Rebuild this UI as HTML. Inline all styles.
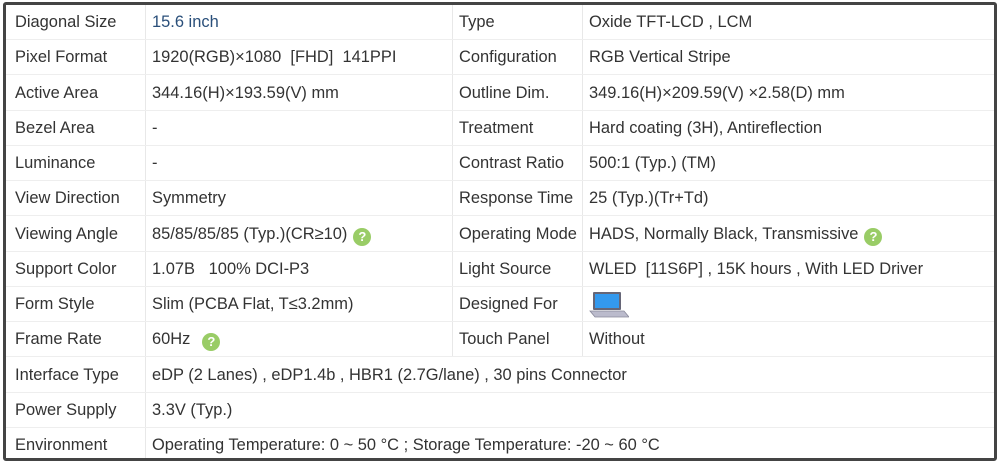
<!DOCTYPE html><html><head><style>
body{margin:0;width:1000px;height:463px;background:#fff;overflow:hidden;font-family:"Liberation Sans",Arial,sans-serif;font-size:16.45px;color:#333}
.box{position:absolute;left:3px;top:2px;width:988px;height:453px;border:3px solid #444;border-radius:3px}
.r{position:absolute;left:0;width:988px;height:35px;border-bottom:1px solid #eee;box-sizing:border-box}
.c{position:absolute;top:0;height:34px;line-height:34px;white-space:nowrap}
.vl{position:absolute;top:0;bottom:0;width:1px;background:#e8e8e8}
.q{display:inline-block;width:18px;height:18px;border-radius:50%;background:#9c6;color:#fff;font-weight:bold;font-size:13px;line-height:18px;text-align:center;vertical-align:-2px;margin-left:6px}
</style></head><body><div class="box">
<div class="vl" style="left:139px"></div><div class="vl" style="left:446px;bottom:auto;height:352px"></div><div class="vl" style="left:576px;bottom:auto;height:352px"></div>
<div class="r" style="top:0"><span class="c" style="left:9px">Diagonal Size</span><span class="c" style="left:146px;color:#2a4f7a">15.6 inch</span><span class="c" style="left:453px">Type</span><span class="c" style="left:583px">Oxide TFT-LCD , LCM</span></div>
<div class="r" style="top:35.25px"><span class="c" style="left:9px">Pixel Format</span><span class="c" style="left:146px">1920(RGB)×1080&nbsp; [FHD]&nbsp; 141PPI</span><span class="c" style="left:453px">Configuration</span><span class="c" style="left:583px">RGB Vertical Stripe</span></div>
<div class="r" style="top:70.5px"><span class="c" style="left:9px">Active Area</span><span class="c" style="left:146px">344.16(H)×193.59(V) mm</span><span class="c" style="left:453px">Outline Dim.</span><span class="c" style="left:583px">349.16(H)×209.59(V) ×2.58(D) mm</span></div>
<div class="r" style="top:105.75px"><span class="c" style="left:9px">Bezel Area</span><span class="c" style="left:146px">-</span><span class="c" style="left:453px">Treatment</span><span class="c" style="left:583px">Hard coating (3H), Antireflection</span></div>
<div class="r" style="top:141px"><span class="c" style="left:9px">Luminance</span><span class="c" style="left:146px">-</span><span class="c" style="left:453px">Contrast Ratio</span><span class="c" style="left:583px">500:1 (Typ.) (TM)</span></div>
<div class="r" style="top:176.25px"><span class="c" style="left:9px">View Direction</span><span class="c" style="left:146px">Symmetry</span><span class="c" style="left:453px">Response Time</span><span class="c" style="left:583px">25 (Typ.)(Tr+Td)</span></div>
<div class="r" style="top:211.5px"><span class="c" style="left:9px">Viewing Angle</span><span class="c" style="left:146px">85/85/85/85 (Typ.)(CR≥10)<span class="q">?</span></span><span class="c" style="left:453px">Operating Mode</span><span class="c" style="left:583px">HADS, Normally Black, Transmissive<span class="q">?</span></span></div>
<div class="r" style="top:246.75px"><span class="c" style="left:9px">Support Color</span><span class="c" style="left:146px">1.07B&nbsp;&nbsp; 100% DCI-P3</span><span class="c" style="left:453px">Light Source</span><span class="c" style="left:583px">WLED&nbsp; [11S6P] , 15K hours , With LED Driver</span></div>
<div class="r" style="top:282px"><span class="c" style="left:9px">Form Style</span><span class="c" style="left:146px">Slim (PCBA Flat, T≤3.2mm)</span><span class="c" style="left:453px">Designed For</span><span class="c" style="left:583px"><svg width="40" height="30" viewBox="0 0 40 30" style="vertical-align:middle"><rect x="4" y="2" width="28" height="18" rx="1" fill="#667"/><rect x="6" y="4" width="24" height="14" fill="#39e"/><path d="M1 21 L35 21 L40 27 L6 27 Z" fill="#bbc" stroke="#889" stroke-width=".8"/></svg></span></div>
<div class="r" style="top:317.25px"><span class="c" style="left:9px">Frame Rate</span><span class="c" style="left:146px">60Hz<span class="q" style="margin-left:12px">?</span></span><span class="c" style="left:453px">Touch Panel</span><span class="c" style="left:583px">Without</span></div>
<div class="r" style="top:352.5px"><span class="c" style="left:9px">Interface Type</span><span class="c" style="left:146px">eDP (2 Lanes) , eDP1.4b , HBR1 (2.7G/lane) , 30 pins Connector</span></div>
<div class="r" style="top:387.75px"><span class="c" style="left:9px">Power Supply</span><span class="c" style="left:146px">3.3V (Typ.)</span></div>
<div class="r" style="top:423px;border:none"><span class="c" style="left:9px">Environment</span><span class="c" style="left:146px">Operating Temperature: 0 ~ 50 °C ; Storage Temperature: -20 ~ 60 °C</span></div>
</div></body></html>
